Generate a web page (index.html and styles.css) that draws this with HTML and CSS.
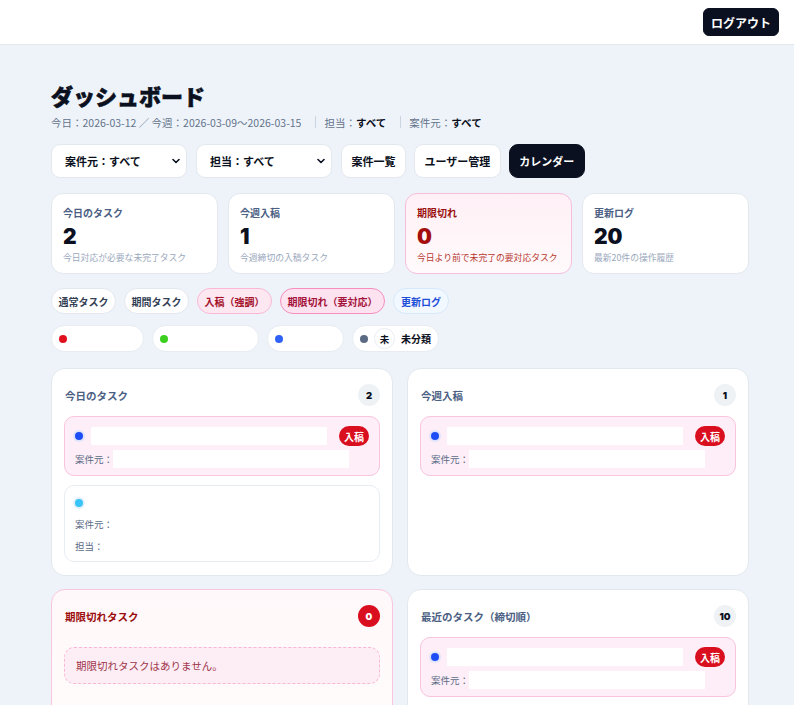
FILE: index.html
```html
<!DOCTYPE html>
<html lang="ja">
<head>
    <meta charset="UTF-8">
    <meta name="viewport" content="width=device-width, initial-scale=1.0">
    <title>ダッシュボード</title>
    <link rel="stylesheet" href="styles.css">
</head>
<body>
    <header class="topbar">
        <button class="btn btn-dark btn-logout">ログアウト</button>
    </header>

    <main class="page">
        <h1 class="page-title">ダッシュボード</h1>
        <div class="page-meta">
            <span>今日：2026-03-12 ／ 今週：2026-03-09〜2026-03-15</span>
            <span class="sep"></span>
            <span>担当：<b>すべて</b></span>
            <span class="sep"></span>
            <span>案件元：<b>すべて</b></span>
        </div>

        <!-- フィルター -->
        <div class="toolbar">
            <div class="select-wrap">
                <select class="select">
                    <option>案件元：すべて</option>
                </select>
                <svg class="chev" width="8" height="6" viewBox="0 0 8 6"><path d="M1 1.5l3 3 3-3" fill="none" stroke="#0b1020" stroke-width="1.6" stroke-linecap="round" stroke-linejoin="round"/></svg>
            </div>
            <div class="select-wrap">
                <select class="select">
                    <option>担当：すべて</option>
                </select>
                <svg class="chev" width="8" height="6" viewBox="0 0 8 6"><path d="M1 1.5l3 3 3-3" fill="none" stroke="#0b1020" stroke-width="1.6" stroke-linecap="round" stroke-linejoin="round"/></svg>
            </div>
            <div class="btn-group">
                <button class="btn">案件一覧</button>
                <button class="btn">ユーザー管理</button>
                <button class="btn btn-dark">カレンダー</button>
            </div>
        </div>

        <!-- 集計 -->
        <div class="stats">
            <div class="stat">
                <div class="stat-label">今日のタスク</div>
                <div class="stat-num">2</div>
                <div class="stat-desc">今日対応が必要な未完了タスク</div>
            </div>
            <div class="stat">
                <div class="stat-label">今週入稿</div>
                <div class="stat-num">1</div>
                <div class="stat-desc">今週締切の入稿タスク</div>
            </div>
            <div class="stat stat-alert">
                <div class="stat-label">期限切れ</div>
                <div class="stat-num">0</div>
                <div class="stat-desc">今日より前で未完了の要対応タスク</div>
            </div>
            <div class="stat">
                <div class="stat-label">更新ログ</div>
                <div class="stat-num">20</div>
                <div class="stat-desc">最新20件の操作履歴</div>
            </div>
        </div>

        <div class="chips">
            <span class="chip">通常タスク</span>
            <span class="chip">期間タスク</span>
            <span class="chip chip-pink">入稿（強調）</span>
            <span class="chip chip-hot">期限切れ（要対応）</span>
            <span class="chip chip-blue">更新ログ</span>
        </div>

        <div class="legend">
            <span class="legend-item"><i class="dot dot-red"></i><span class="blank-name w61"></span></span>
            <span class="legend-item"><i class="dot dot-green"></i><span class="blank-name w75"></span></span>
            <span class="legend-item"><i class="dot dot-blue"></i><span class="blank-name w45"></span></span>
            <span class="legend-item legend-none"><i class="dot dot-gray"></i><span class="mini">未</span><span>未分類</span></span>
        </div>

        <!-- パネル -->
        <div class="panels">
            <section class="panel">
                <div class="panel-head">
                    <h2 class="panel-title">今日のタスク</h2>
                    <span class="count">2</span>
                </div>
                <div class="task task-accent">
                    <div class="task-head">
                        <i class="tdot tdot-blue"></i>
                        <span class="blank"></span>
                        <span class="tag">入稿</span>
                    </div>
                    <div class="task-meta">案件元：<span class="blank"></span></div>
                </div>
                <div class="task task-plain">
                    <div class="task-head">
                        <i class="tdot tdot-cyan"></i>
                    </div>
                    <div class="task-meta">案件元：</div>
                    <div class="task-meta">担当：</div>
                </div>
            </section>

            <section class="panel">
                <div class="panel-head">
                    <h2 class="panel-title">今週入稿</h2>
                    <span class="count">1</span>
                </div>
                <div class="task task-accent">
                    <div class="task-head">
                        <i class="tdot tdot-blue"></i>
                        <span class="blank"></span>
                        <span class="tag">入稿</span>
                    </div>
                    <div class="task-meta">案件元：<span class="blank"></span></div>
                </div>
            </section>

            <section class="panel panel-alert">
                <div class="panel-head">
                    <h2 class="panel-title">期限切れタスク</h2>
                    <span class="count count-red">0</span>
                </div>
                <div class="empty">期限切れタスクはありません。</div>
            </section>

            <section class="panel">
                <div class="panel-head">
                    <h2 class="panel-title">最近のタスク（締切順）</h2>
                    <span class="count">10</span>
                </div>
                <div class="task task-accent">
                    <div class="task-head">
                        <i class="tdot tdot-blue"></i>
                        <span class="blank"></span>
                        <span class="tag">入稿</span>
                    </div>
                    <div class="task-meta">案件元：<span class="blank"></span></div>
                </div>
                <div class="task task-plain">
                    <div class="task-head">
                        <i class="tdot tdot-cyan"></i>
                    </div>
                    <div class="task-meta">案件元：</div>
                    <div class="task-meta">担当：</div>
                </div>
            </section>
        </div>
    </main>
</body>
</html>
```

FILE: styles.css
```css
/* 全体 */
html, body {
    margin: 0;
    background: #eef3fa;
    font-family: "Noto Sans CJK JP", "Noto Sans", sans-serif;
    color: #0b1020;
}

* {
    box-sizing: border-box;
}

/* ヘッダー */
.topbar {
    height: 45px;
    background: #ffffff;
    border-bottom: 1px solid #e3e8ef;
    display: flex;
    justify-content: flex-end;
    align-items: center;
    padding: 0 15px 0 0;
}

.btn {
    height: 34px;
    padding: 0 9.5px;
    font-family: inherit;
    font-size: 11px;
    font-weight: 700;
    color: #0b1020;
    background: #ffffff;
    border: 1px solid #e3e8ef;
    border-radius: 9px;
    cursor: pointer;
}

.btn-dark {
    background: #0b1020;
    border-color: #0b1020;
    color: #ffffff;
}

.btn-logout {
    height: 28px;
    padding: 0 7px;
    font-size: 12px;
    border-radius: 6px;
}

/* メイン */
.page {
    padding: 36px 45px 40px 51px;
}

.page-title {
    margin: 0;
    font-size: 22px;
    line-height: 28px;
    font-weight: 900;
    -webkit-text-stroke: 0.6px #0b1020;
}

.page-meta {
    margin-top: 5px;
    height: 16px;
    display: flex;
    align-items: center;
    font-size: 10.5px;
    color: #64748b;
}

.page-meta b {
    color: #0b1020;
    font-weight: 700;
}

.sep {
    width: 1px;
    height: 12px;
    background: #cbd5e1;
    margin: 0 8px 0 14px;
}

/* フィルター */
.toolbar {
    margin-top: 14px;
    height: 34px;
    display: flex;
    gap: 9px;
}

.btn-group {
    display: flex;
    gap: 8px;
}

.select-wrap {
    position: relative;
    width: 136px;
}

.select {
    width: 100%;
    height: 34px;
    appearance: none;
    -webkit-appearance: none;
    padding: 0 0 0 13px;
    font-family: inherit;
    font-size: 11px;
    font-weight: 700;
    color: #0b1020;
    background: #ffffff;
    border: 1px solid #e3e8ef;
    border-radius: 9px;
}

.chev {
    position: absolute;
    right: 7px;
    top: 14px;
    pointer-events: none;
}

/* 集計カード */
.stats {
    margin-top: 15px;
    display: grid;
    grid-template-columns: repeat(4, 1fr);
    gap: 10px;
}

.stat {
    height: 81px;
    padding: 12px 10px 0 11px;
    background: #ffffff;
    border: 1px solid #e3e8ef;
    border-radius: 12px;
}

.stat-label {
    font-size: 10px;
    line-height: 14px;
    font-weight: 700;
    color: #4b6083;
}

.stat-num {
    margin-top: 4px;
    font-family: Inter, "Noto Sans", sans-serif;
    font-size: 21px;
    line-height: 26px;
    font-weight: 900;
    color: #0b1020;
}

.stat-desc {
    margin-top: 1px;
    font-size: 8.8px;
    line-height: 14px;
    white-space: nowrap;
    color: #9aa8bc;
}

.stat-alert {
    background: linear-gradient(180deg, #fff0f6 0%, #fffafc 100%);
    border-color: #f7bedb;
}

.stat-alert .stat-label {
    color: #9b1111;
}

.stat-alert .stat-num {
    color: #a30d0d;
}

.stat-alert .stat-desc {
    color: #b8382f;
}

/* 種別チップ */
.chips {
    margin-top: 14px;
    display: flex;
    gap: 8px;
}

.chip {
    height: 26px;
    padding: 0 6.5px;
    display: inline-flex;
    align-items: center;
    font-size: 10px;
    font-weight: 700;
    color: #334155;
    background: #ffffff;
    border: 1px solid #e3e8ef;
    border-radius: 13px;
}

.chip-pink {
    background: #fde7f1;
    border-color: #f9b9d6;
    color: #a3122a;
}

.chip-hot {
    background: #fde2ef;
    border-color: #f48fc0;
    color: #a3123a;
}

.chip-blue {
    padding: 0 7px;
    background: #f2f8ff;
    border-color: #d6e8fb;
    color: #1d4ed8;
}

/* 凡例 */
.legend {
    margin-top: 11px;
    display: flex;
    gap: 8px;
}

.legend-item {
    height: 27px;
    padding: 0 8px 0 7px;
    display: inline-flex;
    align-items: center;
    gap: 7px;
    font-size: 10px;
    font-weight: 700;
    background: #ffffff;
    border: 1px solid #e8ecf2;
    border-radius: 14px;
}

.legend-none {
    padding-right: 7px;
    gap: 6px;
}

.dot {
    width: 8px;
    height: 8px;
    border-radius: 50%;
    flex: none;
}

.dot-red { background: #e0101f; }
.dot-green { background: #3ccf1f; }
.dot-blue { background: #2e62f5; }
.dot-gray { background: #5a6b83; }

.blank-name { height: 10px; }
.w61 { width: 61px; }
.w75 { width: 75px; }
.w45 { width: 45px; }

.mini {
    width: 21px;
    height: 21px;
    border: 1px solid #e8ecf2;
    border-radius: 50%;
    display: inline-flex;
    align-items: center;
    justify-content: center;
    font-size: 9.5px;
}

/* パネル */
.panels {
    margin-top: 16px;
    display: grid;
    grid-template-columns: 1fr 1fr;
    column-gap: 14px;
    row-gap: 13px;
}

.panel {
    padding: 15px 12px 13px;
    background: #ffffff;
    border: 1px solid #e3e8ef;
    border-radius: 14px;
    display: flex;
    flex-direction: column;
    gap: 9px;
}

.panel-head {
    height: 22px;
    display: flex;
    align-items: center;
    justify-content: space-between;
    padding-left: 1px;
    margin-bottom: 1px;
}

.panel-title {
    margin: 0;
    font-size: 10.5px;
    font-weight: 700;
    color: #4b6083;
}

.count {
    width: 22px;
    height: 22px;
    border-radius: 50%;
    background: #eef2f5;
    display: inline-flex;
    align-items: center;
    justify-content: center;
    font-family: Inter, "Noto Sans", sans-serif;
    font-size: 9.5px;
    font-weight: 900;
}

.count-red {
    background: #d90f1f;
    color: #ffffff;
}

.panel-alert {
    background: linear-gradient(180deg, #fff8fa 0%, #fffdfb 100%);
    border-color: #f9c6de;
}

.panel-alert .panel-title {
    color: #9b0c0c;
}

.empty {
    margin-top: 10px;
    height: 37px;
    padding: 0 11px;
    display: flex;
    align-items: center;
    font-size: 10.5px;
    color: #a0364b;
    background: #fdeef6;
    border: 1px dashed #f9b7d5;
    border-radius: 10px;
}

/* タスク */
.task {
    border-radius: 10px;
    display: flex;
    flex-direction: column;
    gap: 4px;
}

.task-accent {
    padding: 9px 10px 7px;
    background: #fdeef7;
    border: 1px solid #f9c4de;
}

.task-plain {
    padding: 9px 10px 6px;
    background: #ffffff;
    border: 1px solid #e8edf3;
}

.task-head {
    height: 20px;
    display: flex;
    align-items: center;
}

.task-plain .task-head {
    height: 16px;
}

.task-meta {
    height: 18px;
    display: flex;
    align-items: center;
    font-size: 9.5px;
    color: #5b6b85;
}

.tdot {
    width: 8px;
    height: 8px;
    border-radius: 50%;
    flex: none;
}

.tdot-blue {
    background: #1d4ef5;
    box-shadow: 0 0 0 2px #dfe4fb;
}

.tdot-cyan {
    background: #38c4f8;
    box-shadow: 0 0 0 2px #e2f1fa;
}

.blank {
    width: 236px;
    height: 18px;
    background: #ffffff;
}

.task-head .blank {
    margin-left: 8px;
}

.tag {
    margin-left: auto;
    height: 20px;
    padding: 0 5px;
    display: inline-flex;
    align-items: center;
    font-size: 10px;
    font-weight: 700;
    color: #ffffff;
    background: #d90f1f;
    border-radius: 10px;
}
```
